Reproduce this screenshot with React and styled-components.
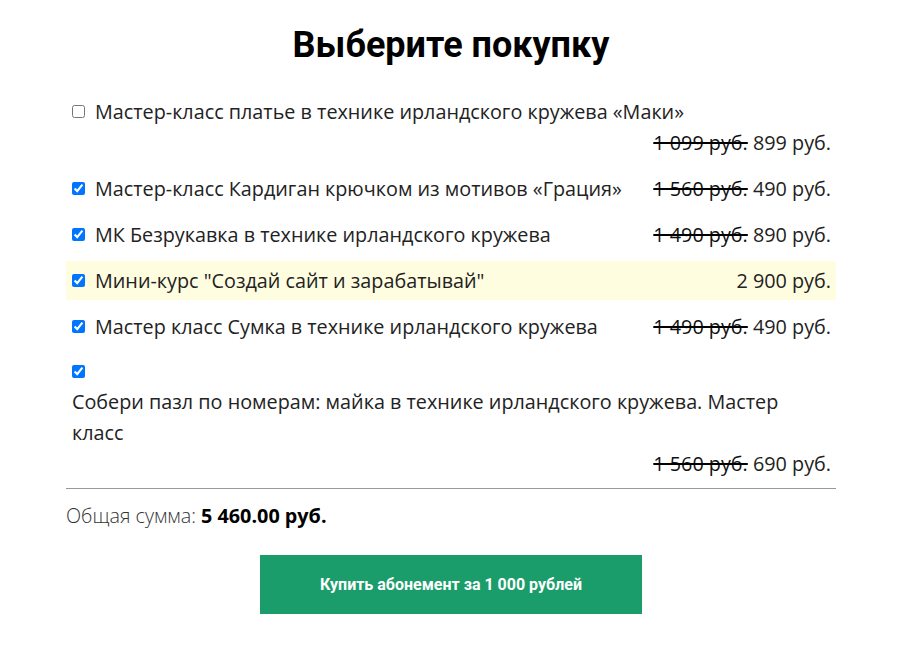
import React, { useState } from 'react'
import styled, { createGlobalStyle } from 'styled-components'

const GlobalStyle = createGlobalStyle`
    body {
        margin: 0;
        background: #fff;
        font-family: 'Open Sans', 'Liberation Sans', sans-serif;
        color: #222;
    }
`

const items = [
    { id: 1, name: 'Мастер-класс платье в технике ирландского кружева «Маки»', old: '1 099 руб.', price: '899 руб.', checked: false },
    { id: 2, name: 'Мастер-класс Кардиган крючком из мотивов «Грация»', old: '1 560 руб.', price: '490 руб.', checked: true },
    { id: 3, name: 'МК Безрукавка в технике ирландского кружева', old: '1 490 руб.', price: '890 руб.', checked: true },
    { id: 4, name: 'Мини-курс "Создай сайт и зарабатывай"', price: '2 900 руб.', checked: true, highlight: true },
    { id: 5, name: 'Мастер класс Сумка в технике ирландского кружева', old: '1 490 руб.', price: '490 руб.', checked: true },
    { id: 6, name: 'Собери пазл по номерам: майка в технике ирландского кружева. Мастер класс', old: '1 560 руб.', price: '690 руб.', checked: true },
]

function App() {
  const [state, setState] = useState(items)

  const toggle = (id) =>
    setState(state.map(i => (i.id === id ? { ...i, checked: !i.checked } : i)))

  return (
    <Container>
        <GlobalStyle />
        <Title>Выберите покупку</Title>
        <List>
            {state.map(item => (
                <Row key={item.id} highlight={item.highlight}>
                    <Check type="checkbox" checked={item.checked} onChange={() => toggle(item.id)} />
                    <Name>{item.name}</Name>
                    <Price>
                        {item.old && <Old>{item.old}</Old>}
                        {item.old && ' '}
                        {item.price}
                    </Price>
                </Row>
            ))}
        </List>
        <Total>
            Общая сумма: <b>5 460.00 руб.</b>
        </Total>
        <ButtonWrap>
            <BuyButton>Купить абонемент за 1 000 рублей</BuyButton>
        </ButtonWrap>
    </Container>
  )
}

export default App

const Container = styled.div`
    width: 770px;
    margin: 0 auto;
    padding-top: 22px;
`

const Title = styled.h1`
    margin: 0 0 24px;
    text-align: center;
    font-family: Roboto, 'Liberation Sans', sans-serif;
    font-weight: 700;
    font-size: 36px;
    line-height: 46px;
    color: #000;
`

const List = styled.div`
    display: flex;
    flex-direction: column;
    gap: 7px;
    padding-bottom: 5px;
    border-bottom: 1px solid #999;
`

const Row = styled.div`
    display: flex;
    flex-wrap: wrap;
    align-items: center;
    padding: 4px 5px 4px 6px;
    font-size: 19.8px;
    line-height: 31px;
    background: ${p => (p.highlight ? '#fffde0' : 'transparent')};
`

const Check = styled.input`
    width: 13px;
    height: 13px;
    margin: 8px 10px 8px 0;
`

const Name = styled.span`
    flex: 0 1 auto;
    min-width: 0;
`

const Price = styled.span`
    margin-left: auto;
    padding-left: 16px;
    white-space: nowrap;
`

const Old = styled.s`
    color: #111;
    text-decoration-color: #000;
    text-decoration-thickness: 2px;
`

const Total = styled.div`
    padding-top: 12px;
    font-size: 19.8px;
    line-height: 30px;
    font-weight: 300;
    color: #333;

    b {
        font-weight: 700;
        color: #000;
    }
`

const ButtonWrap = styled.div`
    display: flex;
    justify-content: center;
    padding-top: 24px;
`

const BuyButton = styled.button`
    width: 382px;
    height: 59px;
    border: none;
    background: #1b9d6b;
    color: #fff;
    font-family: Roboto, 'Liberation Sans', sans-serif;
    font-weight: 700;
    font-size: 16px;
    cursor: pointer;
`
